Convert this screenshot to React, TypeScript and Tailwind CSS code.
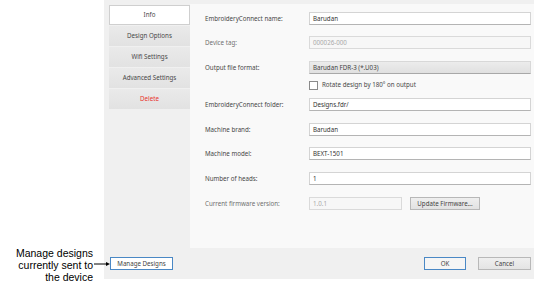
const tabs = ["Info", "Design Options", "Wifi Settings", "Advanced Settings", "Delete"];

function Field({ label, value, disabled, mt }: { label: string; value: string; disabled?: boolean; mt: string }) {
  return (
    <div className={`flex items-center h-[13px] ${mt}`}>
      <div className={`w-[104px] shrink-0 ${disabled ? "text-[#707070]" : "text-[#474747]"}`}>{label}</div>
      <div
        className={`flex-1 h-[13px] flex items-center px-[3px] border ${
          disabled ? "bg-[#f7f7f7] border-[#dadada] text-[#a8a8a8]" : "bg-white border-[#d4d4d4] border-b-[#b4b4b4] text-[#333]"
        }`}
      >
        {value}
      </div>
    </div>
  );
}

export default function App() {
  return (
    <div className="relative w-[534px] h-[299px] bg-white flex font-['Noto_Sans',sans-serif] text-[6.2px]">
      {/* annotation */}
      <div className="w-[104px] shrink-0 flex flex-col justify-end pb-[16px] pr-[11px]">
        <p className="text-right font-['Liberation_Sans',Arial,sans-serif] text-[10.5px] leading-[12px] text-black">
          Manage designs
          <br />
          currently sent to
          <br />
          the device
        </p>
      </div>
      <svg className="absolute left-[94px] top-[261px]" width="17" height="6" viewBox="0 0 17 6">
        <line x1="0" y1="3" x2="13" y2="3" stroke="#000" strokeWidth="1" />
        <path d="M12 1 L16 3 L12 5 Z" fill="#000" />
      </svg>

      {/* dialog */}
      <div className="w-[430px] h-[279px] bg-[#f0f0f0] flex flex-col">
        <div className="flex pl-[5px] pt-[4px] h-[248px]">
          <div className="w-[81px] shrink-0 flex flex-col gap-[1px] pt-[1px]">
            {tabs.map((t, i) => (
              <div
                key={t}
                className={`h-[20px] flex items-center justify-center ${
                  i === 0
                    ? "bg-white border border-[#cfcfcf] text-[#474747]"
                    : `bg-gradient-to-b from-[#eaeaea] to-[#e2e2e2] ${t === "Delete" ? "text-[#e8332f]" : "text-[#474747]"}`
                }`}
              >
                {t}
              </div>
            ))}
          </div>
          <div className="flex-1 bg-[#f9f9f9] pl-[15px] pr-[3px] pt-[8px] flex flex-col">
            <Field label="EmbroideryConnect name:" value="Barudan" mt="mt-0" />
            <Field label="Device tag:" value="000026-000" disabled mt="mt-[11px]" />
            <div className="flex items-center h-[13px] mt-[12px]">
              <div className="w-[104px] shrink-0 text-[#474747]">Output file format:</div>
              <div className="flex-1 h-[13px] flex items-center px-[3px] bg-gradient-to-b from-[#ececec] to-[#e0e0e0] border border-[#d8d8d8] border-b-[#a8a8a8] text-[#444]">
                Barudan FDR-3 (*.U03)
              </div>
            </div>
            <div className="flex items-center h-[10px] mt-[6px] pl-[104px]">
              <div className="w-[9px] h-[9px] bg-white border border-[#8a8a8a]" />
              <span className="ml-[4px] text-[#474747]">Rotate design by 180° on output</span>
            </div>
            <Field label="EmbroideryConnect folder:" value="Designs.fdr/" mt="mt-[8px]" />
            <Field label="Machine brand:" value="Barudan" mt="mt-[12px]" />
            <Field label="Machine model:" value="BEXT-1501" mt="mt-[11px]" />
            <Field label="Number of heads:" value="1" mt="mt-[12px]" />
            <div className="flex items-center h-[13px] mt-[12px]">
              <div className="w-[104px] shrink-0 text-[#707070]">Current firmware version:</div>
              <div className="w-[93px] h-[13px] flex items-center px-[3px] bg-[#f7f7f7] border border-[#dadada] text-[#a8a8a8]">
                1.0.1
              </div>
              <button className="ml-[8px] w-[70px] h-[13px] flex items-center justify-center bg-gradient-to-b from-[#efefef] to-[#e2e2e2] border border-[#b8b8b8] text-[#444]">
                Update Firmware...
              </button>
            </div>
          </div>
        </div>
        <div className="flex items-center h-[31px] pl-[6px] pr-[3px]">
          <button className="w-[63px] h-[13px] flex items-center justify-center bg-white border border-[#4a88c5] text-[#444]">
            Manage Designs
          </button>
          <div className="flex-1" />
          <button className="w-[42px] h-[13px] flex items-center justify-center bg-[#f5f5f5] border border-[#4a88c5] text-[#444]">
            OK
          </button>
          <button className="ml-[12px] w-[53px] h-[13px] flex items-center justify-center bg-gradient-to-b from-[#efefef] to-[#e4e4e4] border border-[#b8b8b8] text-[#444]">
            Cancel
          </button>
        </div>
      </div>
    </div>
  );
}
